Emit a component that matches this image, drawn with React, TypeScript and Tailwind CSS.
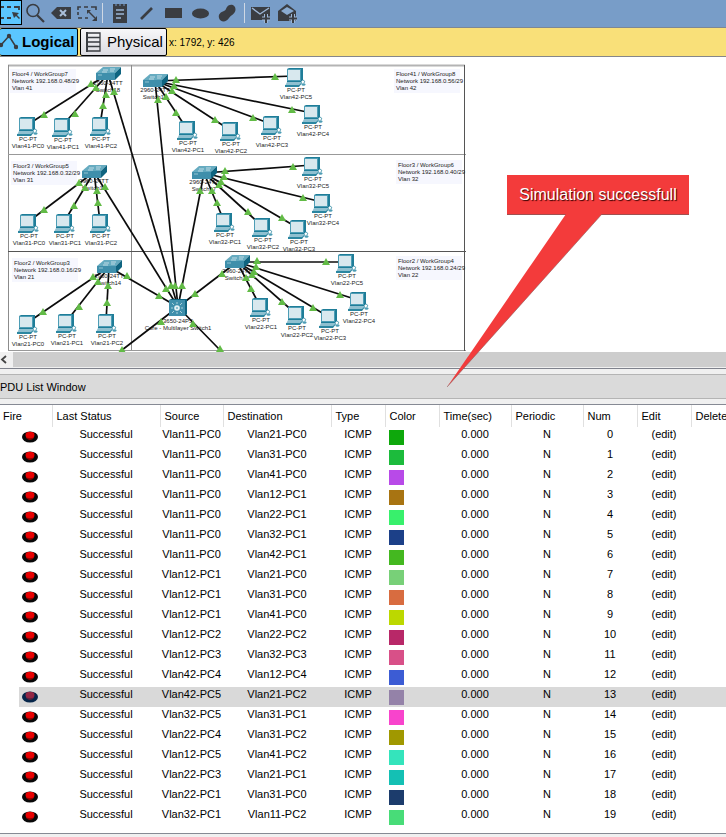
import React from "react";

type Point = [number, number];

const pcs: { name: string; at: Point; link: number }[] = [
  { name: "Vlan41-PC0", at: [17, 117], link: 0 },
  { name: "Vlan41-PC1", at: [52, 118], link: 0 },
  { name: "Vlan41-PC2", at: [90, 117], link: 0 },
  { name: "Vlan42-PC5", at: [285, 68], link: 1 },
  { name: "Vlan42-PC4", at: [302, 105], link: 1 },
  { name: "Vlan42-PC3", at: [261, 116], link: 1 },
  { name: "Vlan42-PC2", at: [220, 122], link: 1 },
  { name: "Vlan42-PC1", at: [177, 121], link: 1 },
  { name: "Vlan31-PC0", at: [18, 214], link: 2 },
  { name: "Vlan31-PC1", at: [54, 214], link: 2 },
  { name: "Vlan31-PC2", at: [90, 214], link: 2 },
  { name: "Vlan32-PC5", at: [302, 157], link: 3 },
  { name: "Vlan32-PC4", at: [312, 194], link: 3 },
  { name: "Vlan32-PC3", at: [288, 220], link: 3 },
  { name: "Vlan32-PC2", at: [252, 218], link: 3 },
  { name: "Vlan32-PC1", at: [214, 213], link: 3 },
  { name: "Vlan21-PC0", at: [17, 315], link: 4 },
  { name: "Vlan21-PC1", at: [56, 314], link: 4 },
  { name: "Vlan21-PC2", at: [96, 314], link: 4 },
  { name: "Vlan22-PC5", at: [336, 254], link: 5 },
  { name: "Vlan22-PC4", at: [348, 292], link: 5 },
  { name: "Vlan22-PC3", at: [319, 309], link: 5 },
  { name: "Vlan22-PC2", at: [286, 306], link: 5 },
  { name: "Vlan22-PC1", at: [250, 298], link: 5 },
];

const switches: { name: string; at: Point }[] = [
  { name: "Switch18", at: [96, 67] },
  { name: "Switch19", at: [143, 74] },
  { name: "Switch16", at: [82, 165] },
  { name: "Switch17", at: [192, 166] },
  { name: "Switch14", at: [97, 260] },
  { name: "Switch15", at: [225, 255] },
];

const core: Point = [178, 307];

const ports: Point[] = [
  [91, 84], [44, 115], [96, 88], [75, 114], [106, 95], [103, 106], [114, 92],
  [176, 80], [275, 77], [174, 86], [292, 110], [172, 91], [253, 118], [215, 120],
  [176, 113], [166, 97], [158, 100],
  [79, 183], [44, 210], [85, 188], [74, 206], [97, 191], [98, 203], [105, 187],
  [225, 171], [293, 167], [224, 177], [303, 198], [221, 182], [219, 185], [282, 218],
  [248, 212], [212, 191], [217, 203], [200, 191],
  [93, 277], [43, 312], [98, 282], [79, 307], [108, 286], [107, 303], [127, 276], [159, 296],
  [166, 289], [171, 286], [175, 286], [182, 286], [195, 294], [222, 274], [161, 322],
  [193, 324], [122, 350], [220, 349],
  [257, 261], [326, 262], [256, 267], [340, 295], [254, 272], [252, 275], [313, 308],
  [282, 302], [246, 278], [251, 289],
];

const notes: { at: Point; lines: string[] }[] = [
  { at: [12, 76], lines: ["Floor4 / WorkGroup7", "Network 192.168.0.48/29", "Vlan 41"] },
  { at: [396, 76], lines: ["Floor41 / WorkGroup8", "Network 192.168.0.56/29", "Vlan 42"] },
  { at: [13, 168], lines: ["Floor3 / WorkGroup5", "Network 192.168.0.32/29", "Vlan 31"] },
  { at: [398, 167], lines: ["Floor3 / WorkGroup6", "Network 192.168.0.40/29", "Vlan 32"] },
  { at: [14, 265], lines: ["Floor2 / WorkGroup3", "Network 192.168.0.16/29", "Vlan 21"] },
  { at: [398, 263], lines: ["Floor2 / WorkGroup4", "Network 192.168.0.24/29", "Vlan 22"] },
];

const events: [string, string, string][] = [
  ["Vlan11-PC0", "Vlan21-PC0", "#0ea80c"],
  ["Vlan11-PC0", "Vlan31-PC0", "#1cbb3c"],
  ["Vlan11-PC0", "Vlan41-PC0", "#b84ae8"],
  ["Vlan11-PC0", "Vlan12-PC1", "#a87412"],
  ["Vlan11-PC0", "Vlan22-PC1", "#38f06c"],
  ["Vlan11-PC0", "Vlan32-PC1", "#1c4088"],
  ["Vlan11-PC0", "Vlan42-PC1", "#44b820"],
  ["Vlan12-PC1", "Vlan21-PC0", "#78d078"],
  ["Vlan12-PC1", "Vlan31-PC0", "#d86c40"],
  ["Vlan12-PC1", "Vlan41-PC0", "#bcd800"],
  ["Vlan12-PC2", "Vlan22-PC2", "#b82868"],
  ["Vlan12-PC3", "Vlan32-PC3", "#d85088"],
  ["Vlan42-PC4", "Vlan12-PC4", "#3c5cd4"],
  ["Vlan42-PC5", "Vlan21-PC2", "#9482a8"],
  ["Vlan32-PC5", "Vlan31-PC1", "#f844cc"],
  ["Vlan22-PC4", "Vlan31-PC2", "#a09800"],
  ["Vlan12-PC5", "Vlan41-PC2", "#34e4bc"],
  ["Vlan22-PC3", "Vlan21-PC1", "#14c0b4"],
  ["Vlan22-PC1", "Vlan31-PC0", "#1c3c6c"],
  ["Vlan32-PC1", "Vlan11-PC2", "#48dc78"],
];

const SELECTED = 13;

const headings = [
  "Fire", "Last Status", "Source", "Destination", "Type", "Color",
  "Time(sec)", "Periodic", "Num", "Edit", "Delete",
];

function Pc({ at: [x, y] }: { at: Point }) {
  return (
    <g transform={`translate(${x} ${y})`}>
      <path d="M2 1 L4 0 H18 V12 L16 14 H2Z" fill="#1f7d98" />
      <rect x="2" y="1" width="14" height="12" fill="#4d9db5" />
      <rect x="3" y="2" width="12" height="10" fill="#d8e8ee" />
      <path d="M2 14 H17 L14 18 H0Z" fill="#8fc0d0" />
      <path d="M0 17 H14 L17 14 V15 L14 19 H0Z" fill="#2b86a0" />
      <path d="M18 12 q3 1 1 3" fill="none" stroke="#2b86a0" strokeWidth="0.8" />
      <ellipse cx="18.500" cy="16.500" rx="2" ry="1.300" fill="#4d9db5" />
    </g>
  );
}

function Switch({ at: [x, y] }: { at: Point }) {
  return (
    <g transform={`translate(${x} ${y})`}>
      <path d="M0 6 L7 0 H25 L19 6Z" fill="#66abc0" />
      <path d="M0 6 H19 V13 H0Z" fill="#3f8fab" />
      <path d="M19 6 L25 0 V7 L19 13Z" fill="#0f6480" />
      <path d="M7 3 h5 m2 -1 h5 M6 5 h5 m3 -1 h4" stroke="#d5e9ef" strokeWidth="0.8" />
      <path d="M2 8 h4" stroke="#a8d0dc" strokeWidth="0.8" />
    </g>
  );
}

function Core() {
  return (
    <g transform="translate(169 299)">
      <path d="M0 1 L2 0 H18 V15 L16 17 H0Z" fill="#0f6480" />
      <rect x="0" y="1" width="16" height="16" fill="#3f8fab" />
      <circle cx="8" cy="9" r="2.800" fill="#e4f1f5" />
      <path d="M8 3 v2 M8 13 v2 M2 9 h2 M12 9 h2 M3 4 l2 2 M13 4 l-2 2 M3 14 l2 -2 M13 14 l-2 -2" stroke="#b5d6e0" strokeWidth="0.9" />
      <circle cx="8" cy="9" r="1" fill="#6fb0c4" />
    </g>
  );
}

function Topology() {
  return (
    <svg
      width="466"
      height="295"
      viewBox="0 57 466 295"
      className="block shrink-0 text-[6px]"
      role="img"
      aria-label="Network topology"
    >
      <path d="M8 65.500 H465" stroke="#b4b4b4" strokeWidth="2" />
      <path d="M8.500 65 V351 M131.500 65 V351" stroke="#8c8c8c" />
      <path d="M8 154.500 H466 M8 350.500 H466" stroke="#999" />
      <path d="M8 251.500 H466 M464.500 65 V351" stroke="#555" />
      {notes.map((n, i) => (
        <g key={i}>
          <rect x={n.at[0] - 2} y={n.at[1] - 7} width="66" height="24" fill="#f6f7fe" />
          {n.lines.map((t, k) => (
            <text key={t} x={n.at[0]} y={n.at[1] + k * 7} fill="#222">{t}</text>
          ))}
        </g>
      ))}
      <g textAnchor="middle" fill="#222">
        {pcs.map((p) => (
          <g key={p.name}>
            <text x={p.at[0] + 11} y={p.at[1] + 24}>PC-PT</text>
            <text x={p.at[0] + 11} y={p.at[1] + 31}>{p.name}</text>
          </g>
        ))}
        {switches.map((s) => (
          <g key={s.name}>
            <text x={s.at[0] + 12} y={s.at[1] + 18}>2960-24TT</text>
            <text x={s.at[0] + 12} y={s.at[1] + 25}>{s.name}</text>
          </g>
        ))}
        <text x="178" y="323">3650-24PS</text>
        <text x="178" y="330">Core - Multilayer Switch1</text>
      </g>
      <g stroke="#0c0c0c" strokeWidth="1.700">
        {pcs.map((p) => {
          const s = switches[p.link].at;
          return <line key={p.name} x1={s[0] + 12} y1={s[1] + 7} x2={p.at[0] + 10} y2={p.at[1] + 8} />;
        })}
        {switches.map((s) => (
          <line key={s.name} x1={s.at[0] + 12} y1={s.at[1] + 7} x2={core[0]} y2={core[1]} />
        ))}
        <path d="M178 307 L122 350 M178 307 L220 350" />
      </g>
      {switches.map((s) => <Switch key={s.name} at={s.at} />)}
      {pcs.map((p) => <Pc key={p.name} at={p.at} />)}
      <Core />
      {ports.map(([x, y], i) => (
        <path key={i} d={`M${x} ${y - 4} L${x + 4} ${y + 3} H${x - 4}Z`} fill="#62bb46" />
      ))}
    </svg>
  );
}

function Tool({ label, children, className = "w-[22px]" }: { label: string; children: React.ReactNode; className?: string }) {
  return (
    <button type="button" aria-label={label} className={`flex h-[25px] shrink-0 items-center justify-center ${className}`}>
      <svg width="20" height="20" viewBox="0 0 20 20" fill="none" aria-hidden="true">{children}</svg>
    </button>
  );
}

function Toolbar() {
  const ink = "#3a3d42";
  return (
    <div role="toolbar" className="flex h-7 items-start border-b border-[#7d8794] bg-[#789dc8]">
      <Tool label="Select" className="w-[22px] border border-black bg-[#5bc6ff]">
        <path d="M0 4 H3 M6 4 H10 M13 4 H18 V7 M0 15 H3 M6 15 H10" stroke={ink} strokeWidth="1.800" />
        <path d="M11 9 L18 10 L16 12 L19 15 L18 16 L15 13 L13 15Z" fill={ink} />
      </Tool>
      <div className="ml-0.5 flex gap-1">
        <Tool label="Inspect">
          <circle cx="8" cy="7.500" r="6" stroke={ink} strokeWidth="1.600" />
          <path d="M12 12 L19 19" stroke={ink} strokeWidth="2.200" />
        </Tool>
        <Tool label="Delete">
          <path d="M0 10 L6 4 H20 V16 H6Z" fill={ink} />
          <path d="M9 7 L15 13 M15 7 L9 13" stroke="#a9bfdb" strokeWidth="2" />
        </Tool>
        <Tool label="Resize shape">
          <path d="M1 7 V4 H4 M7 4 H11 M14 4 H19 V7 M1 9 V12 M1 15 H5 M8 15 H11" stroke={ink} strokeWidth="1.600" />
          <path d="M11 8 L18 15" stroke={ink} strokeWidth="1.400" />
          <path d="M10 7 h4 l-4 4Z M20 18 h-5 l5 -5Z" fill={ink} />
        </Tool>
      </div>
      <div className="mt-[3px] ml-1 h-5 w-px bg-[#cfd8e4]" />
      <div className="ml-[5px] flex gap-[5px]">
        <Tool label="Place note">
          <path d="M4 1 H18 V20 H4Z" fill={ink} />
          <path d="M7 0 v3 M11 0 v3 M15 0 v3" stroke="#789dc8" />
          <path d="M7 7 H15 M7 11 H15 M7 15 H12" stroke="#9cb6d6" strokeWidth="1.400" />
        </Tool>
        <Tool label="Draw line"><path d="M5 16 L16 5" stroke={ink} strokeWidth="2.600" /></Tool>
        <Tool label="Draw rectangle"><rect x="2" y="5" width="17" height="10" fill={ink} /></Tool>
        <Tool label="Draw ellipse"><ellipse cx="10.500" cy="10.500" rx="8.500" ry="5" fill={ink} /></Tool>
        <Tool label="Draw freeform">
          <path d="M10 4 C13 0 19 2 18.500 7 C18 11 14 12 12 15 C9 20 3 19 2 15 C1 11 4 9 7 8 C9 7 9 5.500 10 4Z" fill={ink} />
        </Tool>
      </div>
      <div className="mt-[3px] ml-1.5 h-5 w-px bg-[#cfd8e4]" />
      <div className="ml-1 flex gap-[5px]">
        <Tool label="Add simple PDU">
          <path d="M1 4 H20 V17 H1Z" fill={ink} />
          <path d="M2 5 L10 11 L19 5" stroke="#9cb6d6" strokeWidth="1.400" />
          <path d="M16 11 v9 M12 15.500 h8" stroke="#9cb6d6" strokeWidth="4" />
          <path d="M16 11 v9 M12 15.500 h8" stroke={ink} strokeWidth="2" />
        </Tool>
        <Tool label="Add complex PDU">
          <path d="M1 8 L10 1 L19 8 V18 H1Z" fill={ink} />
          <path d="M4 8 L10 4 L17 8 L10 12Z" fill="#8aabd0" />
          <path d="M16 11 v9 M12 15.500 h8" stroke="#9cb6d6" strokeWidth="4" />
          <path d="M16 11 v9 M12 15.500 h8" stroke={ink} strokeWidth="2" />
        </Tool>
      </div>
    </div>
  );
}

function ModeBar() {
  return (
    <div className="flex h-[29px] items-start gap-0.5 border-b border-[#85868a] bg-[#f9e079]">
      <button type="button" className="flex h-7 w-[78px] items-center gap-1 rounded-xs border border-l-0 border-black bg-[#5bc6ff] text-[15px] font-bold">
        <svg width="18" height="18" viewBox="0 0 18 18" aria-hidden="true">
          <path d="M1 12 L9 3 L16 14" fill="none" stroke="#3a3d42" strokeWidth="1.500" />
          <circle cx="1" cy="12" r="2.200" fill="#3a3d42" />
          <circle cx="9" cy="3" r="2.200" fill="#3a3d42" />
          <circle cx="16" cy="14" r="2.200" fill="#3a3d42" />
        </svg>
        Logical
      </button>
      <button type="button" className="flex h-7 w-[87px] items-center gap-1.5 rounded-xs border border-black bg-linear-to-b from-[#f7f7f9] to-[#dcdce2] pl-1 text-[15px]">
        <svg width="16" height="20" viewBox="0 0 16 20" aria-hidden="true">
          <path d="M2 1 H15 V19 H2Z M2 5.500 H15 M2 10 H15 M2 14.500 H15" fill="none" stroke="#3a3d42" strokeWidth="1.300" />
          <path d="M2 0 V20" stroke="#3a3d42" strokeWidth="2" />
        </svg>
        Physical
      </button>
      <span className="self-center text-[10px]">x: 1792, y: 426</span>
    </div>
  );
}

function FireIcon({ selected }: { selected: boolean }) {
  return (
    <svg width="16" height="12" viewBox="0 0 16 12" className="block" aria-hidden="true">
      <ellipse cx="8" cy="6" rx="8" ry="5.500" fill={selected ? "#06264a" : "#080808"} />
      <path d="M4 4 V7 Q8 11 12 7 V4Z" fill={selected ? "#5a2340" : "#8c0000"} />
      <ellipse cx="8" cy="4" rx="4.500" ry="3.300" fill={selected ? "#932744" : "#e80000"} />
    </svg>
  );
}

function PduTable() {
  return (
    <table className="w-full table-fixed border-collapse overflow-hidden text-[11px] leading-[14px] whitespace-nowrap">
      <colgroup>
        <col className="w-[52px]" />
        <col className="w-[108px]" />
        <col className="w-[63px]" />
        <col className="w-[108px]" />
        <col className="w-[54px]" />
        <col className="w-[54px]" />
        <col className="w-[72px]" />
        <col className="w-[72px]" />
        <col className="w-[54px]" />
        <col className="w-[54px]" />
        <col />
      </colgroup>
      <thead>
        <tr className="h-[22px]">
          {headings.map((h) => (
            <th key={h} scope="col" className="border-r border-[#e0e0e0] p-0 pl-1 text-left font-normal first:pl-[3px] last:border-r-0">{h}</th>
          ))}
        </tr>
      </thead>
      <tbody>
        {events.map(([source, destination, color], i) => {
          const selected = i === SELECTED;
          const cell = selected ? "bg-[#d9d9d9] p-0 pb-1.5 text-center" : "p-0 pb-1.5 text-center";
          return (
            <tr key={i} className="h-5">
              <td className="p-0">
                <div className={selected ? "ml-[19px] flex h-5 items-center bg-[#d9d9d9] pl-[3px]" : "ml-[19px] flex h-5 items-center pl-[3px]"}>
                  <button type="button" aria-label={`Fire PDU ${i}`}><FireIcon selected={selected} /></button>
                </div>
              </td>
              <td className={cell}>Successful</td>
              <td className={cell}>{source}</td>
              <td className={cell}>{destination}</td>
              <td className={cell}>ICMP</td>
              <td className={selected ? "bg-[#d9d9d9] p-0" : "p-0"}>
                <div className="ml-1 size-[15px]" style={{ backgroundColor: color }} />
              </td>
              <td className={cell}>0.000</td>
              <td className={cell}>N</td>
              <td className={cell}>{i}</td>
              <td className={cell}><button type="button" className="block w-full">(edit)</button></td>
              <td className={cell} />
            </tr>
          );
        })}
      </tbody>
    </table>
  );
}

function Callout() {
  return (
    <div className="absolute top-[175px] left-[447px] w-[242px]">
      <div className="ml-[60px] flex h-10 items-center justify-center border-b border-[#a05050] bg-[#f33b3b] text-base text-white [text-shadow:1px_1px_1px_#300]">
        Simulation successfull
      </div>
      <svg width="156" height="174" viewBox="0 0 156 174" className="-mt-px block" aria-hidden="true">
        <path d="M119 0 H155 L0 173Z" fill="#f33b3b" />
        <path d="M155 0 L0 173" stroke="#8b5a5a" strokeWidth="0.600" />
      </svg>
    </div>
  );
}

export default function App() {
  return (
    <div className="relative flex min-h-screen flex-col overflow-hidden bg-[#f0f0f0] font-['Liberation_Sans',Arial,sans-serif] text-black">
      <Toolbar />
      <ModeBar />
      <main className="overflow-hidden bg-white">
        <Topology />
      </main>
      <div className="flex h-[17px] border-b border-[#7f828c] bg-[#f0f0f0] pb-px">
        <button type="button" aria-label="Scroll left" className="flex w-[13px] items-center bg-[#f0f0f0]">
          <svg width="8" height="9" viewBox="0 0 8 9" aria-hidden="true">
            <path d="M6 1 L2 4.500 L6 8" fill="none" stroke="#444" strokeWidth="1.800" />
          </svg>
        </button>
        <div className="grow bg-[#cdcdcd]" />
      </div>
      <h2 className="mt-[5px] flex h-[25px] items-center border-y border-[#b4b4b4] bg-[#dadada] pt-0.5 text-[11px]">PDU List Window</h2>
      <section className="mt-[5px] grow border-y border-[#868a94] bg-white">
        <PduTable />
      </section>
      <div className="h-[3px]" />
      <Callout />
    </div>
  );
}
